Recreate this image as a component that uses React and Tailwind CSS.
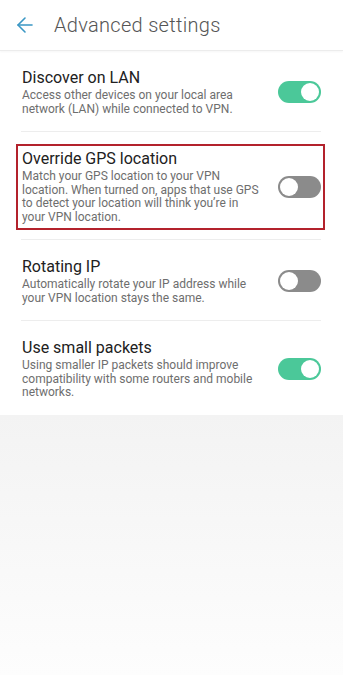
import React, { useState } from 'react';
import { ArrowLeft } from 'lucide-react';

// settings shown on the screen (lines kept as they wrap on the device)
const SETTINGS = [
  {
    id: 'lan',
    title: 'Discover on LAN',
    lines: ['Access other devices on your local area', 'network (LAN) while connected to VPN.'],
    on: true,
  },
  {
    id: 'gps',
    title: 'Override GPS location',
    lines: [
      'Match your GPS location to your VPN',
      'location. When turned on, apps that use GPS',
      'to detect your location will think you\u2019re in',
      'your VPN location.',
    ],
    on: false,
    marked: true,
  },
  {
    id: 'ip',
    title: 'Rotating IP',
    lines: ['Automatically rotate your IP address while', 'your VPN location stays the same.'],
    on: false,
  },
  {
    id: 'packets',
    title: 'Use small packets',
    lines: [
      'Using smaller IP packets should improve',
      'compatibility with some routers and mobile',
      'networks.',
    ],
    on: true,
  },
];

function Toggle({ on, onClick }) {
  return (
    <button
      onClick={onClick}
      className={`shrink-0 w-[43px] h-[22px] rounded-full p-[2px] flex items-center ${
        on ? 'bg-[#4bc899] justify-end' : 'bg-[#8b8b8b] justify-start'
      }`}
    >
      <span className="block w-[18px] h-[18px] rounded-full bg-white" />
    </button>
  );
}

export default function App() {
  const [values, setValues] = useState(() =>
    Object.fromEntries(SETTINGS.map((s) => [s.id, s.on]))
  );

  return (
    <div className="min-h-screen flex flex-col bg-white font-['Roboto',sans-serif]">
      {/* HEADER */}
      <div className="h-[51px] flex items-center border-b border-[#ececec] shadow-[0_1px_2px_rgba(0,0,0,0.04)]">
        <ArrowLeft size={24} strokeWidth={1.6} className="ml-[13px] text-[#3a97c4]" />
        <h1 className="ml-[17px] text-[20px] leading-[25px] font-light text-[#555555] tracking-[0.3px]">
          Advanced settings
        </h1>
      </div>

      {/* LIST */}
      <div className="pl-[21px] pr-[22px]">
        {SETTINGS.map((s, i) => (
          <div
            key={s.id}
            className={`relative flex items-center justify-between pt-[17px] pb-[15px] ${
              i < SETTINGS.length - 1 ? 'border-b border-[#ededed]' : ''
            }`}
          >
            {s.marked && (
              <div className="absolute top-[12px] bottom-[9px] left-[-5px] right-[-4px] border-2 border-[#b3222c] pointer-events-none" />
            )}
            <div className="w-[240px] pl-px">
              <div className="text-[16px] leading-[19px] text-[#212121]">{s.title}</div>
              <p className="mt-[2px] text-[12px] leading-[13.5px] text-[#6e6e6e]">
                {s.lines.map((line) => (
                  <span key={line} className="block whitespace-nowrap">
                    {line}
                  </span>
                ))}
              </p>
            </div>
            <Toggle
              on={values[s.id]}
              onClick={() => setValues((v) => ({ ...v, [s.id]: !v[s.id] }))}
            />
          </div>
        ))}
      </div>

      {/* EMPTY AREA */}
      <div className="flex-1 bg-gradient-to-b from-[#f3f3f3] to-[#fdfdfd]" />
    </div>
  );
}
